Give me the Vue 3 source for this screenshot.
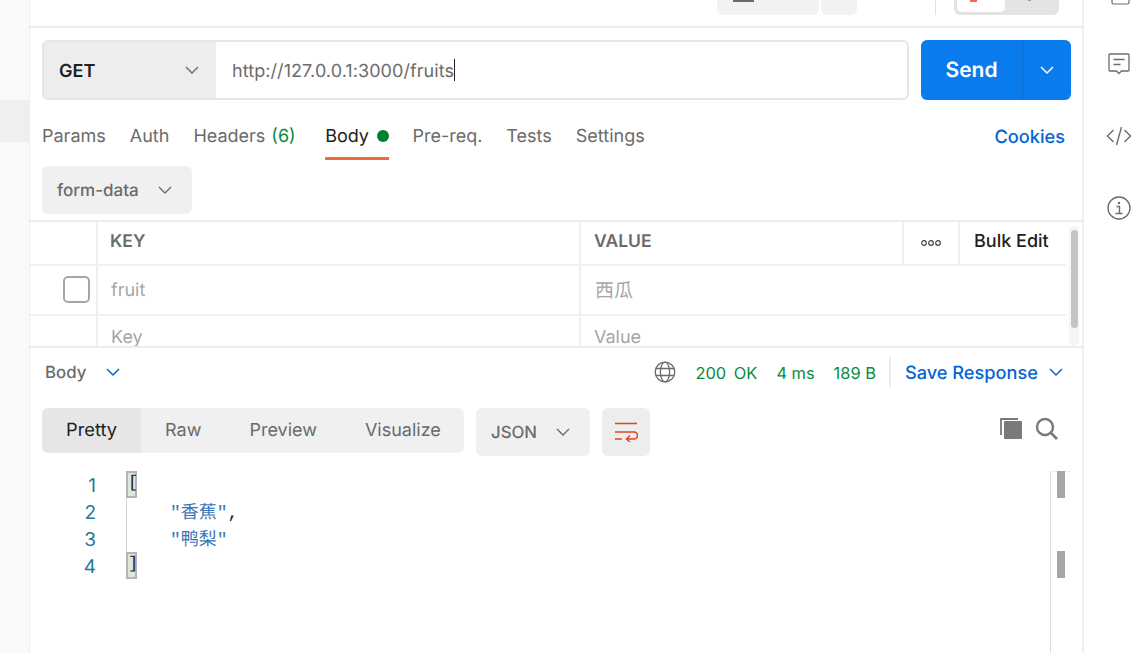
<script setup>
const tabs = [
  { label: 'Params' },
  { label: 'Auth' },
  { label: 'Headers', count: '(6)' },
  { label: 'Body', active: true, dot: true },
  { label: 'Pre-req.' },
  { label: 'Tests' },
  { label: 'Settings' }
]
const views = ['Pretty', 'Raw', 'Preview', 'Visualize']
const lines = [
  { n: 1, text: '[', bracket: true },
  { n: 2, text: '"香蕉"', comma: true },
  { n: 3, text: '"鸭梨"' },
  { n: 4, text: ']', bracket: true }
]
</script>

<template>
  <div class="app">
    <aside class="sidebar"><div class="sel"></div></aside>

    <main class="main">
      <header class="topbar">
        <div class="tb-btn wide"><span class="tb-icon"></span></div>
        <div class="tb-btn narrow"></div>
        <div class="tb-div"></div>
        <div class="toggle"><div class="toggle-on"><span class="tb-orange"></span></div><span class="tb-gray"></span></div>
      </header>

      <section class="urlrow">
        <div class="urlbox">
          <div class="method">
            <span class="nudge">GET</span>
            <svg class="chev" width="16" height="16" viewBox="0 0 16 16"><path d="M2 5l6 6 6-6" fill="none" stroke="#6b6b6b" stroke-width="1.4"/></svg>
          </div>
          <div class="url"><span class="nudge">http://127.0.0.1:3000/fruits</span><i class="caret"></i></div>
        </div>
        <div class="send">
          <span class="send-l">Send</span>
          <span class="send-r">
            <svg width="16" height="16" viewBox="0 0 16 16"><path d="M2 5l6 6 6-6" fill="none" stroke="#fff" stroke-width="1.5"/></svg>
          </span>
        </div>
      </section>

      <nav class="tabs">
        <div v-for="t in tabs" :key="t.label" class="tab" :class="{ active: t.active }">
          <span>{{ t.label }}</span>
          <span v-if="t.count" class="count">{{ t.count }}</span>
          <i v-if="t.dot" class="dot"></i>
        </div>
        <a class="cookies">Cookies</a>
      </nav>

      <div class="bodytype">
        <div class="formdata">
          <span class="nudge">form-data</span>
          <svg width="16" height="16" viewBox="0 0 16 16"><path d="M2 5l6 6 6-6" fill="none" stroke="#6b6b6b" stroke-width="1.4"/></svg>
        </div>
      </div>

      <section class="table">
        <div class="row head">
          <div class="c0"></div>
          <div class="c1">KEY</div>
          <div class="c2">VALUE</div>
          <div class="c3">
            <svg width="22" height="8" viewBox="0 0 22 8"><g fill="none" stroke="#444" stroke-width="1.2"><circle cx="4" cy="4" r="2.3"/><circle cx="11" cy="4" r="2.3"/><circle cx="18" cy="4" r="2.3"/></g></svg>
          </div>
          <div class="c4">Bulk Edit</div>
        </div>
        <div class="row data">
          <div class="c0"><span class="check"></span></div>
          <div class="c1 ph">fruit</div>
          <div class="c2 ph cjk">西瓜</div>
        </div>
        <div class="row data last">
          <div class="c0"></div>
          <div class="c1 ph">Key</div>
          <div class="c2 ph">Value</div>
        </div>
        <div class="sb"><div class="sb-thumb"></div></div>
      </section>

      <section class="resbar">
        <div class="res-l">
          <span class="nudge">Body</span>
          <svg width="16" height="16" viewBox="0 0 16 16"><path d="M2 5l6 6 6-6" fill="none" stroke="#0265d2" stroke-width="1.5"/></svg>
        </div>
        <div class="res-r">
          <svg class="globe" width="22" height="22" viewBox="0 0 22 22"><g fill="none" stroke="#6b6b6b" stroke-width="1.3"><circle cx="11" cy="11" r="9.8"/><ellipse cx="11" cy="11" rx="4.6" ry="9.8"/><path d="M2 7.5h18M2 14.5h18"/></g></svg>
          <span class="st first nudge">200 OK</span>
          <span class="st nudge">4 ms</span>
          <span class="st nudge">189 B</span>
          <i class="vsep"></i>
          <span class="save nudge">Save Response</span>
          <svg width="16" height="16" viewBox="0 0 16 16"><path d="M2 5l6 6 6-6" fill="none" stroke="#0265d2" stroke-width="1.5"/></svg>
        </div>
      </section>

      <section class="toolbar">
        <div class="views">
          <span v-for="v in views" :key="v" class="view" :class="{ on: v === 'Pretty' }">{{ v }}</span>
        </div>
        <div class="json">
          <span class="nudge">JSON</span>
          <svg width="16" height="16" viewBox="0 0 16 16"><path d="M2 5l6 6 6-6" fill="none" stroke="#6b6b6b" stroke-width="1.4"/></svg>
        </div>
        <div class="wrap">
          <svg width="24" height="20" viewBox="0 0 24 20"><g fill="none" stroke="#e0431c" stroke-width="1.5"><path d="M1 1.500h22M1 10h19a3 3 0 0 1 0 7h-7"/><path d="M16 13.500L12.500 17l3.500 3"/><path d="M1 17h7"/></g></svg>
        </div>
        <div class="tools">
          <svg width="24" height="24" viewBox="0 0 24 24"><path d="M2 19V3h17" fill="none" stroke="#7a7a7a" stroke-width="1.8"/><rect x="5" y="5" width="18" height="18" rx="1" fill="#7a7a7a"/></svg>
          <svg width="23" height="23" viewBox="0 0 23 23"><circle cx="10" cy="10" r="8" fill="none" stroke="#7a7a7a" stroke-width="2.4"/><path d="M16 16l6 6" stroke="#7a7a7a" stroke-width="2.6"/></svg>
        </div>
      </section>

      <section class="code">
        <div class="gutter-line"></div>
        <div v-for="l in lines" :key="l.n" class="line">
          <span class="num">{{ l.n }}</span>
          <span v-if="l.bracket" class="brk">{{ l.text }}</span>
          <span v-else class="str">{{ l.text }}<b v-if="l.comma" class="comma">,</b></span>
        </div>
        <div class="minimap">
          <i class="mark m1"></i>
          <i class="mark m2"></i>
        </div>
      </section>
    </main>

    <aside class="rail">
      <svg class="ic-top" width="19" height="5" viewBox="0 0 19 5"><path d="M1 0v2.500a1.500 1.500 0 0 0 1.500 1.500h14a1.500 1.500 0 0 0 1.500-1.500V0" fill="none" stroke="#6b6b6b" stroke-width="1.2"/></svg>
      <svg class="ic-c" width="22" height="22" viewBox="0 0 22 22"><g fill="none" stroke="#6b6b6b" stroke-width="1.3"><path d="M2 1h18a1 1 0 0 1 1 1v15a1 1 0 0 1-1 1h-6.500L11 20.500 8.500 18H2a1 1 0 0 1-1-1V2a1 1 0 0 1 1-1z"/><path d="M5.500 6.500h11M5.500 11.500h7"/></g></svg>
      <svg class="ic-code" width="26" height="20" viewBox="0 0 26 20"><g fill="none" stroke="#6b6b6b" stroke-width="1.4"><path d="M7.500 4L1.500 10l6 6M18.500 4l6 6-6 6M15.500 1l-5 18"/></g></svg>
      <svg class="ic-info" width="24" height="24" viewBox="0 0 24 24"><circle cx="12" cy="12" r="11" fill="none" stroke="#6b6b6b" stroke-width="1.3"/><circle cx="12" cy="7" r="1.200" fill="#6b6b6b"/><path d="M9.500 10.500H12.500V17M8.500 17.500h7" fill="none" stroke="#6b6b6b" stroke-width="1.4"/></svg>
    </aside>
  </div>
</template>

<style>
html, body { margin: 0; overflow: hidden; background: #fff; }
</style>

<style scoped>
.app {
  display: flex;
  width: 1137px;
  height: 653px;
  overflow: hidden;
  background: #fff;
  font-family: Inter, "Noto Sans CJK SC", sans-serif;
  font-size: 18px;
  color: #6b6b6b;
  text-rendering: geometricPrecision;
}
.nudge { margin-top: 2px; }
.sidebar { width: 29px; flex: none; background: #f9f9f9; border-right: 1px solid #ededed; padding-top: 100px; box-sizing: content-box; }
.sel { height: 42px; background: #efefef; }

.main { width: 1052px; flex: none; display: flex; flex-direction: column; overflow: hidden; }
.rail { flex: 1; border-left: 2px solid #f0f0f0; position: relative; display: flex; flex-direction: column; align-items: center; }

.topbar { height: 26px; flex: none; border-bottom: 2px solid #ededed; display: flex; align-items: flex-start; padding-left: 687px; }
.tb-btn { height: 15px; background: #f2f2f2; border-radius: 0 0 6px 6px; }
.tb-btn.wide { width: 102px; margin-right: 2px; padding-left: 16px; box-sizing: border-box; }
.tb-btn.narrow { width: 36px; }
.tb-icon { display: block; width: 21px; height: 2px; background: #6b6b6b; }
.tb-div { width: 1px; height: 15px; background: #e0e0e0; margin-left: 78px; }
.toggle { width: 105px; height: 15px; background: #e4e4e4; border-radius: 0 0 6px 6px; margin-left: 18px; padding-left: 3px; box-sizing: border-box; display: flex; align-items: flex-start; }
.toggle-on { width: 48px; height: 12px; background: #fff; border-radius: 0 0 5px 5px; padding-left: 13px; box-sizing: border-box; }
.tb-orange { display: block; width: 7px; height: 2px; background: #f26b3a; }
.tb-gray { display: block; width: 3px; height: 1px; background: #9a9a9a; margin-left: 23px; }

.urlrow { display: flex; margin: 12px 11px 0 12px; height: 60px; flex: none; }
.urlbox { flex: 1; display: flex; border: 2px solid #e6e6e6; border-radius: 6px; overflow: hidden; box-sizing: border-box; }
.method { width: 172px; flex: none; background: #ededed; display: flex; align-items: center; justify-content: space-between; padding: 0 16px 0 15px; box-sizing: border-box; font-weight: 600; color: #212121; }
.url { flex: 1; display: flex; align-items: center; padding-left: 16px; color: #6b6b6b; letter-spacing: 0.07px; }
.caret { display: inline-block; width: 1px; height: 22px; background: #212121; }
.send { width: 150px; flex: none; margin-left: 12px; background: #097bed; border-radius: 6px; display: flex; color: #fff; font-weight: 600; font-size: 21px; }
.send-l { width: 101px; display: flex; align-items: center; justify-content: center; border-right: 1px solid #0a6fd3; box-sizing: content-box; }
.send-r { flex: 1; display: flex; align-items: center; justify-content: center; }

.tabs { display: flex; align-items: flex-start; height: 60px; margin: 0 17px 0 12px; flex: none; padding-top: 26px; box-sizing: border-box; line-height: 22px; gap: 24px; }
.tab { height: 34px; box-sizing: border-box; white-space: nowrap; display: flex; gap: 6px; align-items: flex-start; }
.tab.active { color: #212121; border-bottom: 3px solid #f26b3a; margin-left: 5.500px; margin-right: -0.500px; gap: 8px; }
.count { color: #0a8a3f; }
.dot { width: 12px; height: 12px; border-radius: 50%; background: #007f31; margin-top: 4px; }
.cookies { margin-left: auto; color: #0265d2; font-weight: 500; font-size: 18.200px; }

.bodytype { height: 60px; flex: none; padding: 6px 0 0 12px; box-sizing: border-box; }
.formdata { width: 150px; height: 48px; background: #f0f0f0; border-radius: 6px; display: flex; align-items: center; justify-content: space-between; padding: 0 19px 0 15px; box-sizing: border-box; font-weight: 500; font-size: 17px; }

.table { height: 124px; flex: none; position: relative; overflow: hidden; border-top: 2px solid #ededed; box-sizing: content-box; }
.row { display: flex; width: 1036px; border-bottom: 2px solid #f0f0f0; box-sizing: border-box; }
.row.head { height: 44px; font-weight: 600; font-size: 17.500px; line-height: 40px; }
.row.data { height: 50px; line-height: 49px; }
.row.last { height: 50px; border-bottom: 0; line-height: 43px; }
.c0 { width: 66px; flex: none; border-right: 2px solid #f0f0f0; box-sizing: content-box; display: flex; align-items: center; justify-content: flex-end; }
.c1 { width: 483px; flex: none; padding-left: 13px; border-right: 2px solid #f0f0f0; box-sizing: border-box; }
.c2 { flex: 1; padding-left: 13px; box-sizing: border-box; }
.head .c1 { padding-left: 12px; }
.data .c0, .data .c1, .data .c2 { min-height: 48px; }
.c3 { width: 56px; flex: none; border-left: 2px solid #f0f0f0; box-sizing: border-box; display: flex; align-items: center; justify-content: center; }
.c4 { width: 108px; flex: none; border-left: 2px solid #f0f0f0; box-sizing: border-box; padding-left: 14px; color: #212121; font-weight: 500; white-space: nowrap; font-size: 18px; }
.ph { color: #a6a6a6; }
.cjk { font-size: 19px; padding-left: 14px; }
.check { display: block; width: 23px; height: 23px; border: 2px solid #a6a6a6; border-radius: 5px; margin: -2px 6px 0 0; }
.sb { position: absolute; right: 3px; top: 4px; bottom: 0; width: 10px; background: #f5f5f5; border-radius: 5px; }
.sb-thumb { width: 7px; margin: 4px auto 0; height: 98px; background: #c4c4c4; border-radius: 4px; }

.resbar { height: 48px; flex: none; border-top: 2px solid #ededed; display: flex; align-items: center; justify-content: space-between; padding: 0 18px 0 15px; box-sizing: content-box; }
.res-l { display: flex; align-items: center; gap: 19px; font-weight: 500; font-size: 16.800px; }
.res-r { display: flex; align-items: center; }
.globe { margin-right: 20px; }
.st { color: #0a8a3f; font-size: 16.400px; margin-right: 19px; }
.st.first { word-spacing: 3px; }
.vsep { width: 2px; height: 30px; background: #ededed; margin: 0 14px 0 -6px; }
.save { color: #0265d2; font-weight: 500; font-size: 18.200px; margin-right: 10px; }

.toolbar { display: flex; align-items: flex-start; flex: none; height: 75px; padding: 12px 0 0 12px; box-sizing: border-box; }
.views { display: flex; height: 45px; background: #f0f0f0; border-radius: 6px; overflow: hidden; width: 422px; flex: none; }
.view { display: flex; align-items: center; padding: 0 24px; line-height: 1; white-space: nowrap; }
.view.on { background: #e6e6e6; color: #212121; border-radius: 6px 0 0 6px; font-size: 18.300px; }
.json { width: 114px; height: 48px; margin-left: 12px; background: #f0f0f0; border-radius: 6px; display: flex; align-items: center; justify-content: space-between; padding: 0 19px 0 15px; box-sizing: border-box; font-weight: 500; font-size: 16.800px; flex: none; }
.wrap { width: 48px; height: 48px; margin-left: 12px; background: #ededed; border-radius: 6px; display: flex; align-items: center; justify-content: center; flex: none; }
.tools { margin-left: auto; display: flex; align-items: center; gap: 12px; padding: 8px 24px 0 0; }

.code { flex: 1; position: relative; font-size: 18px; padding-top: 1px; }
.gutter-line { position: absolute; left: 96px; top: 0; width: 1px; background: #d4d4d4; height: 108px; }
.line { height: 27px; line-height: 27px; display: flex; position: relative; }
.num { width: 66px; text-align: right; color: #237893; flex: none; font-size: 19px; }
.brk { position: absolute; left: 96px; width: 7px; height: 23px; top: -1px; border: 2px solid #b4b4b4; background: #dde5dd; color: #212121; line-height: 22px; text-align: left; font-family: "Liberation Mono", monospace; font-size: 17px; box-sizing: content-box; }
.str { margin-left: 74px; color: #3a74b8; font-family: "Liberation Mono", "Noto Sans CJK SC", monospace; font-size: 18px; line-height: 30px; }
.comma { color: #212121; font-weight: 400; }
.minimap { position: absolute; left: 1020px; top: 0; bottom: 0; width: 20px; border-left: 1px solid #dcdcdc; border-top: 1px solid #ededed; }
.mark { position: absolute; left: 6px; width: 8px; background: #a6a6a6; }
.m1 { top: -1px; height: 27px; }
.m2 { top: 79px; height: 27px; }

.ic-top { position: absolute; left: 27px; top: 0; }
.ic-c { position: absolute; left: 24px; top: 53px; }
.ic-code { position: absolute; left: 22px; top: 126px; }
.ic-info { position: absolute; left: 23px; top: 196px; }
</style>
